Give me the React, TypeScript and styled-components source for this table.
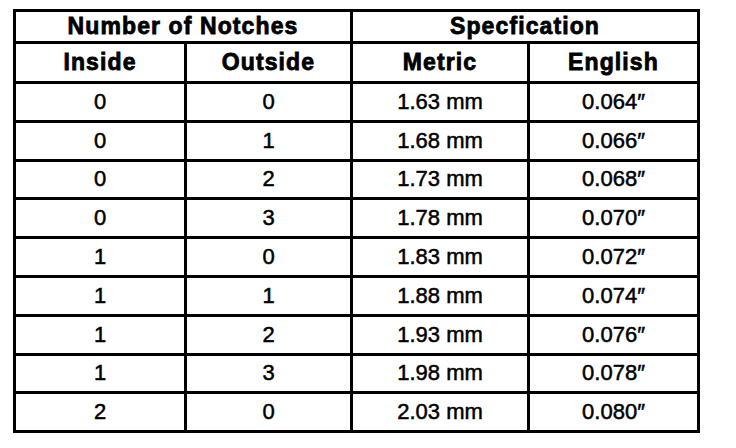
import React from 'react'
import styled, { createGlobalStyle } from 'styled-components'

const GlobalStyle = createGlobalStyle`
  html, body {
    margin: 0;
    padding: 0;
    background: #fff;
  }
  body {
    font-family: "Liberation Sans", Arial, sans-serif;
    color: #000;
  }
`

const Page = styled.div`
  width: 736px;
  height: 448px;
  padding: 9px 0 0 13px;
  box-sizing: border-box;
`

const Table = styled.table`
  border-collapse: collapse;
  table-layout: fixed;
  width: 684px;
  border: 3px solid #000;
`

const HeadCell = styled.th<{ $h: number }>`
  height: ${p => p.$h}px;
  padding: 0;
  border: 3px solid #000;
  font-family: "Liberation Sans", Arial, sans-serif;
  font-weight: 700;
  font-size: 23px;
  letter-spacing: 1.1px;
  text-align: center;
  vertical-align: middle;
  -webkit-text-stroke: 0.8px #000;
`

const Cell = styled.td`
  height: 35.8px;
  padding: 0;
  border: 3px solid #000;
  font-family: "Liberation Sans", Arial, sans-serif;
  font-size: 22px;
  text-align: center;
  vertical-align: middle;
  -webkit-text-stroke: 0.5px #000;
`

const rows = [
  ['0', '0', '1.63 mm', '0.064″'],
  ['0', '1', '1.68 mm', '0.066″'],
  ['0', '2', '1.73 mm', '0.068″'],
  ['0', '3', '1.78 mm', '0.070″'],
  ['1', '0', '1.83 mm', '0.072″'],
  ['1', '1', '1.88 mm', '0.074″'],
  ['1', '2', '1.93 mm', '0.076″'],
  ['1', '3', '1.98 mm', '0.078″'],
  ['2', '0', '2.03 mm', '0.080″'],
]

export default function App() {
  return (
    <>
      <GlobalStyle />
      <Page>
        <Table>
          <colgroup>
            <col style={{ width: 171 }} />
            <col style={{ width: 166 }} />
            <col style={{ width: 177 }} />
            <col style={{ width: 170 }} />
          </colgroup>
          <thead>
            <tr>
              <HeadCell $h={29} colSpan={2}>Number of Notches</HeadCell>
              <HeadCell $h={29} colSpan={2}>Specfication</HeadCell>
            </tr>
            <tr>
              <HeadCell $h={37}>Inside</HeadCell>
              <HeadCell $h={37}>Outside</HeadCell>
              <HeadCell $h={37}>Metric</HeadCell>
              <HeadCell $h={37}>English</HeadCell>
            </tr>
          </thead>
          <tbody>
            {rows.map((r, i) => (
              <tr key={i}>
                {r.map((v, j) => (
                  <Cell key={j}>{v}</Cell>
                ))}
              </tr>
            ))}
          </tbody>
        </Table>
      </Page>
    </>
  )
}
